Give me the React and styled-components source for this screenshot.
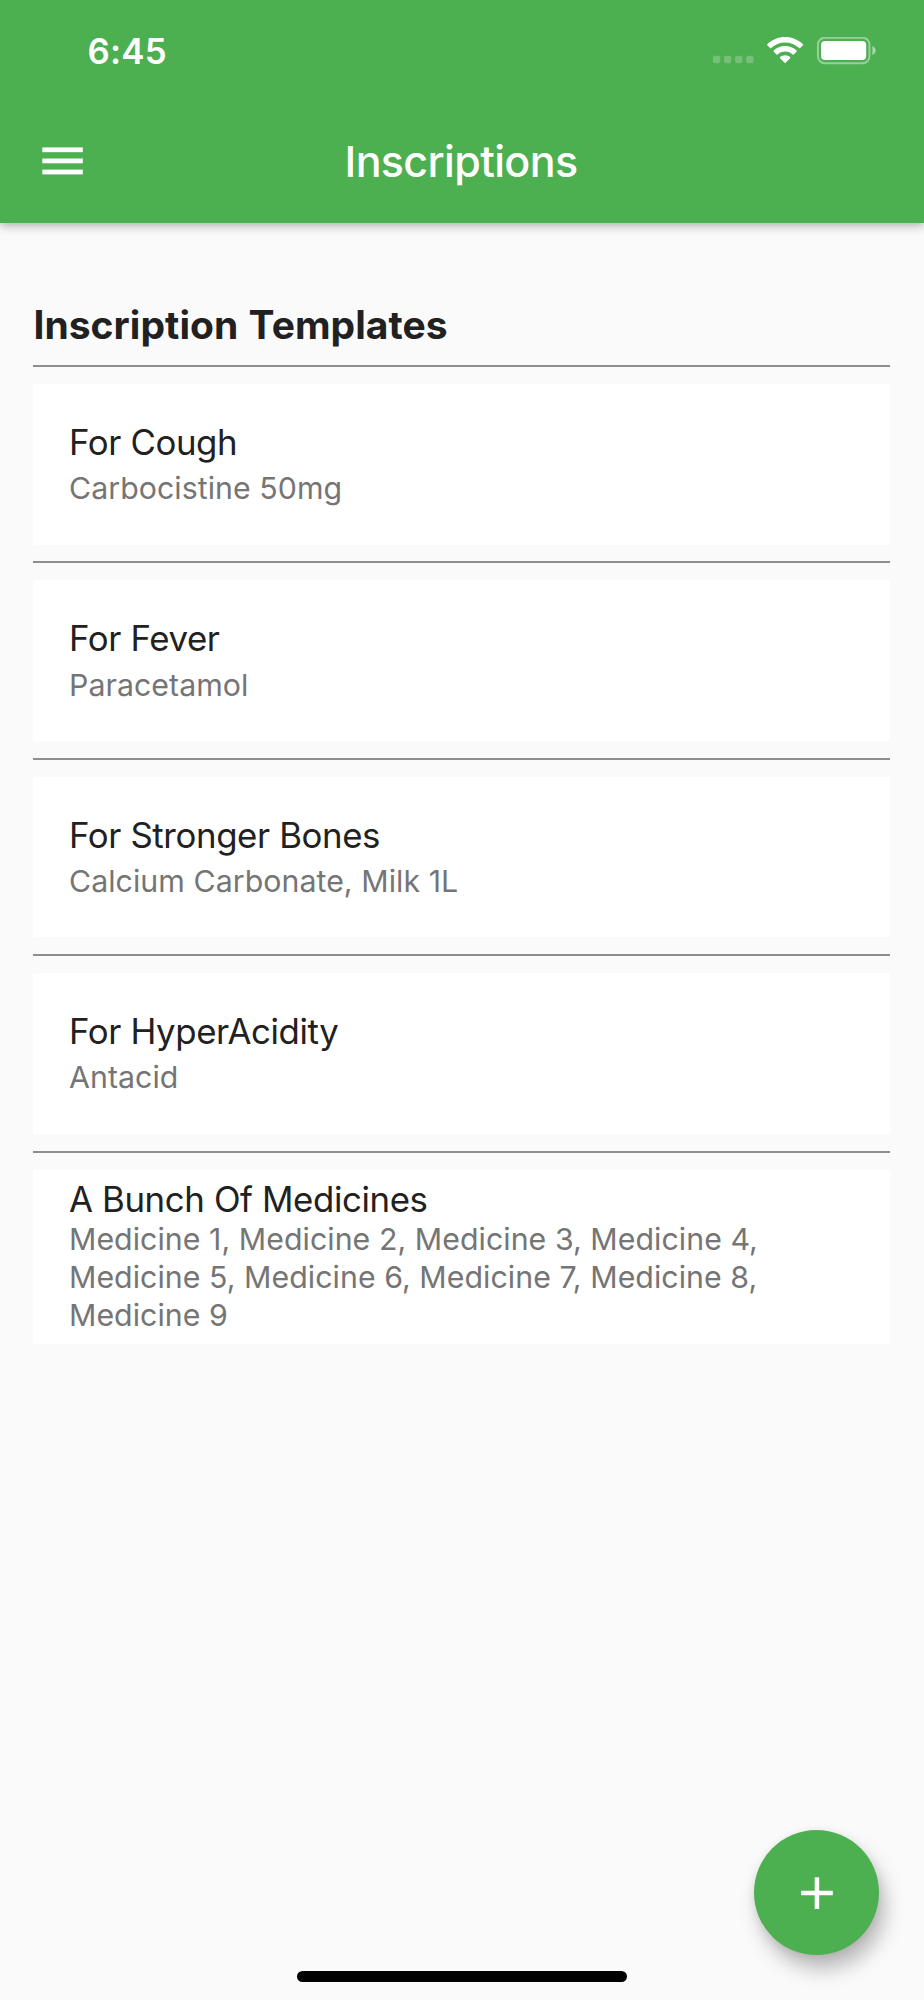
import React from "react";
import styled, { createGlobalStyle } from "styled-components";

const GlobalStyle = createGlobalStyle`
  * { box-sizing: border-box; }
  body { margin: 0; background: #fafafa; }
`;

const Screen = styled.div`
  position: relative;
  display: flex;
  flex-direction: column;
  width: 924px;
  height: 2000px;
  overflow: hidden;
  background: #fafafa;
  color: #212121;
  font-family: Inter, "Liberation Sans", sans-serif;
`;

const Header = styled.header`
  flex: none;
  height: 223px;
  background: #4caf50;
  color: #fff;
  box-shadow: 0 5px 9px rgba(0, 0, 0, 0.17), 0 2px 5px rgba(0, 0, 0, 0.1);
`;

const StatusBar = styled.div`
  display: flex;
  align-items: center;
  justify-content: space-between;
  height: 98px;
  padding: 3px 48px 0 87.6px;
`;

const Time = styled.div`
  font-size: 34.8px;
  font-weight: 600;
  line-height: 42px;
  letter-spacing: 0.2px;
`;

const StatusIcons = styled.svg`
  display: block;
  width: 164px;
  height: 28px;
`;

const Toolbar = styled.div`
  display: grid;
  grid-template-columns: 124px 1fr 126px;
  align-items: center;
  height: 125px;
`;

const MenuButton = styled.button`
  display: block;
  margin: 0 0 0 42px;
  padding: 0;
  border: 0;
  background: none;

  svg {
    display: block;
  }
`;

const Title = styled.h1`
  margin: 0;
  text-align: center;
  font-size: 43px;
  font-weight: 550;
  line-height: 52px;
  letter-spacing: -0.65px;
`;

const Content = styled.main`
  padding: 78px 34px 0 33.4px;
`;

const SectionTitle = styled.h2`
  margin: 0;
  height: 64.05px;
  font-size: 39px;
  font-weight: 700;
  line-height: 48px;
  letter-spacing: 0.05px;
  word-spacing: 1px;
`;

const Divider = styled.hr`
  height: 2px;
  margin: 0 0 17px;
  border: 0;
  background: #8e8e8e;
`;

const Card = styled.article`
  height: ${(p) => (p.$tall ? "174px" : "160.7px")};
  margin-bottom: 16.7px;
  padding: ${(p) => (p.$tall ? "9.8px" : "38px")} 36px 0 35.6px;
  background: #fff;
`;

const Name = styled.h3`
  margin: 0 0 ${(p) => (p.$tall ? "0.7px" : "7.3px")};
  font-size: 34.8px;
  font-weight: 400;
  line-height: 40px;
  letter-spacing: -0.38px;
`;

const Medicines = styled.p`
  margin: 0;
  color: #757575;
  font-size: 30.3px;
  line-height: 38px;
  letter-spacing: 0.05px;
`;

const AddButton = styled.button`
  position: absolute;
  right: 44.6px;
  bottom: 45px;
  display: flex;
  align-items: center;
  justify-content: center;
  width: 125px;
  height: 125px;
  padding: 0;
  border: 0;
  border-radius: 50%;
  background: #4caf50;
  box-shadow: 6px 14px 20px rgba(0, 0, 0, 0.26), 0 2px 10px rgba(0, 0, 0, 0.08);
`;

const HomeIndicator = styled.div`
  position: absolute;
  bottom: 18px;
  left: 297px;
  width: 330px;
  height: 11px;
  border-radius: 6px;
  background: #000;
`;

const templates = [
  { name: "For Cough", medicines: "Carbocistine 50mg" },
  { name: "For Fever", medicines: "Paracetamol" },
  { name: "For Stronger Bones", medicines: "Calcium Carbonate, Milk 1L" },
  { name: "For HyperAcidity", medicines: "Antacid" },
  {
    name: "A Bunch Of Medicines",
    medicines:
      "Medicine 1, Medicine 2, Medicine 3, Medicine 4, Medicine 5, Medicine 6, Medicine 7, Medicine 8, Medicine 9",
    tall: true,
  },
];

function Status() {
  return (
    <StatusIcons viewBox="712 37 164 28" fill="#fff">
      {[712.8, 723.9, 735, 746.1].map((x) => (
        <rect key={x} x={x} y="55.8" width="7.4" height="7.4" rx="2" opacity="0.22" />
      ))}
      <path d="M785.1 37C792 37 798.3 39.7 803 44.2C803.3 44.5 803.3 45 803 45.3L800.1 48.1C799.8 48.4 799.4 48.4 799.1 48.1C795.4 44.6 790.4 42.6 785.1 42.6C779.8 42.6 774.9 44.6 771.2 48.1C770.9 48.4 770.4 48.4 770.1 48.1L767.3 45.3C767 45 767 44.5 767.3 44.2C772 39.7 778.2 37 785.1 37Z" />
      <path d="M785.1 46.1C789.6 46.1 793.6 47.8 796.6 50.6C796.9 50.9 796.9 51.4 796.6 51.7L793.7 54.5C793.4 54.8 793 54.8 792.7 54.5C790.7 52.7 788 51.6 785.1 51.6C782.2 51.6 779.6 52.7 777.6 54.5C777.3 54.8 776.8 54.8 776.5 54.5L773.7 51.7C773.4 51.4 773.4 50.9 773.7 50.6C776.7 47.8 780.7 46.1 785.1 46.1Z" />
      <path d="M785.1 55.3C787 55.3 788.8 56 790.1 57.1C790.4 57.4 790.4 57.9 790.1 58.2L785.7 62.8C785.4 63.1 784.9 63.1 784.6 62.8L780.1 58.2C779.8 57.9 779.8 57.4 780.1 57.1C781.5 56 783.2 55.3 785.1 55.3Z" />
      <rect x="817.9" y="37.7" width="51.6" height="25.6" rx="7" fill="none" stroke="#fff" strokeWidth="2" opacity="0.42" />
      <rect x="821" y="41" width="45.2" height="19" rx="4" />
      <path d="M872.4 46C874.3 46.8 875.7 48.5 875.7 50.5C875.7 52.5 874.3 54.2 872.4 55Z" opacity="0.5" />
    </StatusIcons>
  );
}

export default function App() {
  return (
    <Screen>
      <GlobalStyle />
      <Header>
        <StatusBar>
          <Time>6:45</Time>
          <Status />
        </StatusBar>
        <Toolbar>
          <MenuButton aria-label="Menu">
            <svg width="41" height="28" viewBox="0 0 41 28" fill="#fff">
              <rect x="0.3" y="0.4" width="40.5" height="4.8" />
              <rect x="0.3" y="11.5" width="40.5" height="4.8" />
              <rect x="0.3" y="22.6" width="40.5" height="4.8" />
            </svg>
          </MenuButton>
          <Title>Inscriptions</Title>
        </Toolbar>
      </Header>
      <Content>
        <SectionTitle>Inscription Templates</SectionTitle>
        {templates.map(({ name, medicines, tall }) => (
          <React.Fragment key={name}>
            <Divider />
            <Card $tall={tall}>
              <Name $tall={tall}>{name}</Name>
              <Medicines>{medicines}</Medicines>
            </Card>
          </React.Fragment>
        ))}
      </Content>
      <AddButton aria-label="Add template">
        <svg width="32" height="32" viewBox="0 0 32 32" fill="#fff">
          <path d="M13.7 0.2h4.5v13.6h13.6v4.5H18.2v13.6h-4.5V18.3H0.2v-4.5h13.5z" />
        </svg>
      </AddButton>
      <HomeIndicator />
    </Screen>
  );
}
